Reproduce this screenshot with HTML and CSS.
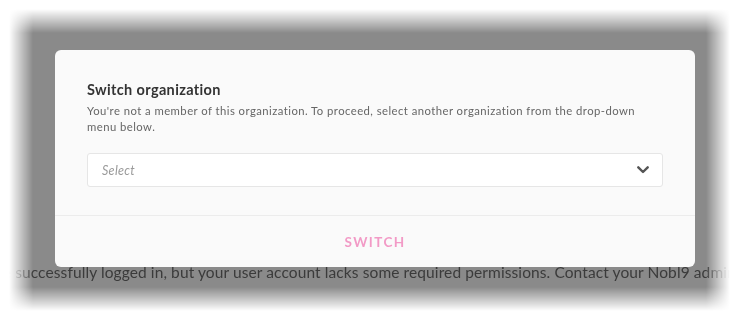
FILE: index.html
```html
<!DOCTYPE html>
<html lang="en">
<head>
<meta charset="UTF-8" />
<meta name="viewport" content="width=device-width, initial-scale=1" />
<title>Switch organization</title>
<link rel="stylesheet" href="styles.css">
</head>
<body>

<div class="shot">
  <div class="backdrop">
    <div class="modal">
      <div class="modal-body">
        <h2 class="modal-title">Switch organization</h2>
        <p class="modal-text">You're not a member of this organization. To proceed, select another organization from the drop-down menu below.</p>
        <div class="select-box">
          <span class="select-placeholder">Select</span>
          <svg class="chevron" width="12" height="8" viewBox="0 0 12 8">
            <polyline points="1.3,1.3 6,6 10.7,1.3" fill="none" stroke="#555" stroke-width="2.4" stroke-linecap="round" stroke-linejoin="round"/>
          </svg>
        </div>
      </div>
      <div class="modal-footer">
        <button class="switch-btn">SWITCH</button>
      </div>
    </div>
    <p class="page-msg">You've successfully logged in, but your user account lacks some required permissions. Contact your Nobl9 admin.</p>
  </div>
</div>

</body>
</html>
```

FILE: styles.css
```css
body {
  margin: 0;
  padding: 0;
  background: #fff;
  font-family: 'Lato', 'Open Sans', sans-serif;
  overflow: hidden;
}
.shot {
  width: 746px;
  height: 323px;
  background: #fff;
}
.backdrop {
  height: 100%;
  box-sizing: border-box;
  padding: 50px 0 0 55px;
  background: #8a8a8a;
  display: flex;
  flex-direction: column;
  align-items: flex-start;
  overflow: hidden;
  -webkit-mask-image: linear-gradient(to right, transparent 9px, #000 33px, #000 706px, transparent 730px),
                      linear-gradient(to bottom, transparent 9px, #000 33px, #000 287px, transparent 311px);
  -webkit-mask-composite: source-in;
  mask-image: linear-gradient(to right, transparent 9px, #000 33px, #000 706px, transparent 730px),
              linear-gradient(to bottom, transparent 9px, #000 33px, #000 287px, transparent 311px);
  mask-composite: intersect;
}
.modal {
  width: 640px;
  background: #fafafa;
  border-radius: 6px;
  position: relative;
  z-index: 2;
}
.modal-body {
  padding: 31px 32px 28px;
  border-bottom: 1px solid #ececec;
}
.modal-title {
  margin: 0;
  font-size: 14.5px;
  font-weight: bold;
  letter-spacing: 0.35px;
  color: #333;
  line-height: 18px;
}
.modal-text {
  margin: 4px 0 18px;
  font-size: 11.3px;
  letter-spacing: 0.45px;
  line-height: 16px;
  color: #666;
}
.select-box {
  height: 32px;
  background: #fff;
  border: 1px solid #e6e6e6;
  border-radius: 3px;
  display: flex;
  align-items: center;
  justify-content: space-between;
  padding: 0 13px 0 14px;
}
.select-placeholder {
  font-size: 12.5px;
  font-style: italic;
  letter-spacing: 0.3px;
  color: #9a9a9a;
}
.modal-footer {
  height: 51px;
  display: flex;
  align-items: center;
  justify-content: center;
}
.switch-btn {
  background: none;
  border: none;
  font-family: inherit;
  font-size: 13.5px;
  font-weight: bold;
  letter-spacing: 1.4px;
  color: #f29ac6;
  cursor: pointer;
  padding: 4px 10px;
}
.page-msg {
  margin: -5px 0 0 -89px;
  white-space: nowrap;
  font-size: 15.5px;
  letter-spacing: 0.1px;
  line-height: 20px;
  color: #3b3b3b;
}
```
